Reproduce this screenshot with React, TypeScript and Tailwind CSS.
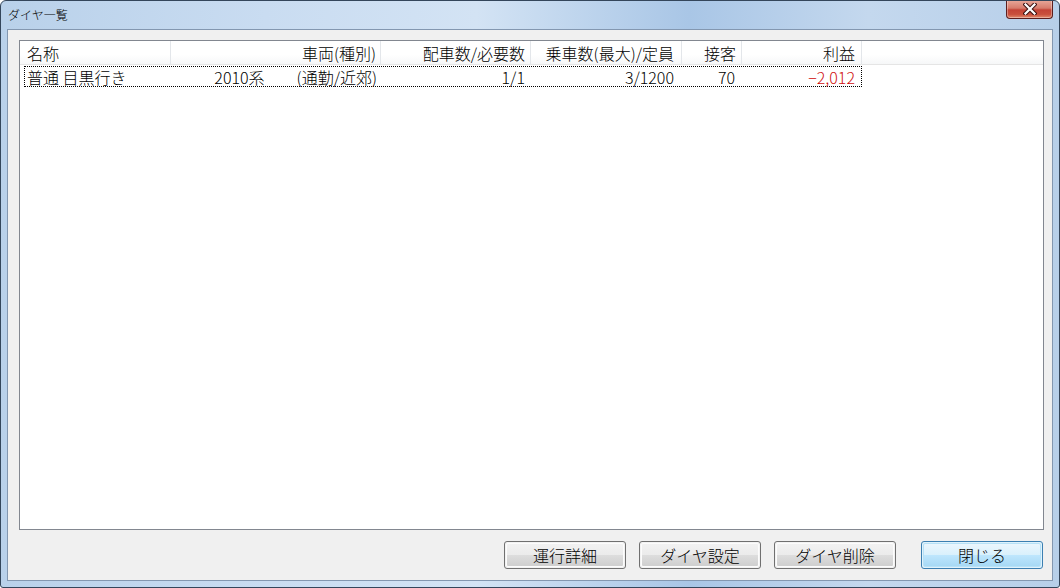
import React from "react";

const F = "font-['Noto_Sans_CJK_JP','Noto_Sans_CJK_SC',sans-serif] font-light";

function Btn({ label, def = false }: { label: string; def?: boolean }) {
  return (
    <div
      className={
        def
          ? "w-[122px] h-[28px] rounded-[3px] border border-[#3c7fb1] p-[1px] bg-[#dff2fc]"
          : "w-[122px] h-[28px] rounded-[3px] border border-[#707070] p-[1px] bg-[#f2f2f2]"
      }
    >
      <div
        className={
          def
            ? "w-full h-full rounded-[2px] border border-[#b6e1f7] bg-[linear-gradient(180deg,#eaf6fd_0%,#d9f0fc_50%,#bee6fd_51%,#a7d9f5_100%)] flex items-center justify-center text-[16px] text-black leading-none"
            : "w-full h-full rounded-[2px] border border-[#fcfcfc] bg-[linear-gradient(180deg,#f2f2f2_0%,#ebebeb_50%,#dddddd_51%,#cfcfcf_100%)] flex items-center justify-center text-[16px] text-black leading-none"
        }
      >
        <span className="-mt-[1px]">{label}</span>
      </div>
    </div>
  );
}

export default function App() {
  return (
    <div
      className={`${F} w-[1060px] h-[588px] flex flex-col rounded-t-[6px] rounded-b-[3px] border border-[#34465b] bg-[linear-gradient(90deg,#b9d1ea_0%,#c9dcf1_25%,#d3e3f4_45%,#a9c6e6_65%,#c4d8ee_82%,#b7cfe9_100%)] overflow-hidden`}
    >
      {/* title bar */}
      <div className="h-[28px] flex items-start justify-between">
        <div className="pl-[7px] pt-[7px] text-[12px] leading-[14px] text-black">ダイヤ一覧</div>
        <div className="-mt-[1px] mr-[6px] w-[47px] h-[19px] rounded-b-[4px] border border-[#5c1e1e] border-t-0 bg-[linear-gradient(180deg,#e9a99b_0%,#d77c6c_45%,#c44336_55%,#c9503c_80%,#e28a6c_100%)] flex items-center justify-center shadow-[inset_0_0_0_1px_rgba(255,255,255,0.35)]">
          <svg width="14" height="12" viewBox="0 0 14 12">
            <path d="M2.5 1.5 L11.5 10.5 M11.5 1.5 L2.5 10.5" stroke="#3a1010" strokeWidth="4.2" strokeLinecap="square" />
            <path d="M2.5 1.5 L11.5 10.5 M11.5 1.5 L2.5 10.5" stroke="#ffffff" strokeWidth="2.2" strokeLinecap="square" />
          </svg>
        </div>
      </div>

      {/* client area */}
      <div className="mx-[6px] h-[552px] border border-[#8397b0] bg-[#f0f0f0] flex flex-col pl-[11px] pr-[8px] pt-[10px]">
        {/* list view */}
        <div className="h-[490px] border border-[#828790] bg-white flex flex-col">
          {/* header */}
          <div className="h-[24px] flex border-b border-[#e5e5e5] bg-[linear-gradient(180deg,#ffffff_0%,#ffffff_60%,#f6f7f8_100%)] text-[16px] text-black leading-none">
            <div className="w-[151px] border-r border-[#e3e6ea] flex items-center pl-[7px]">名称</div>
            <div className="w-[210px] border-r border-[#e3e6ea] flex items-center justify-end pr-[4px]">車両(種別)</div>
            <div className="w-[150px] border-r border-[#e3e6ea] flex items-center justify-end pr-[5px]">配車数/必要数</div>
            <div className="w-[151px] border-r border-[#e3e6ea] flex items-center justify-end pr-[7px]">乗車数(最大)/定員</div>
            <div className="w-[60px] border-r border-[#e3e6ea] flex items-center justify-end pr-[5px]">接客</div>
            <div className="w-[120px] border-r border-[#e3e6ea] flex items-center justify-end pr-[6px]">利益</div>
            <div className="flex-1" />
          </div>
          {/* row */}
          <div className="mt-[1px] ml-[4px] w-[838px] h-[21px] border border-dotted border-black flex text-[16px] text-black leading-none">
            <div className="w-[146px] flex items-center pl-[2px] whitespace-nowrap">普通 目黒行き</div>
            <div className="w-[210px] flex items-center justify-end pr-[4px] whitespace-nowrap">
              <span>2010系</span>
              <span className="ml-[32px]">(通勤/近郊)</span>
            </div>
            <div className="w-[150px] flex items-center justify-end pr-[6px]">1/1</div>
            <div className="w-[151px] flex items-center justify-end pr-[8px]">3/1200</div>
            <div className="w-[60px] flex items-center justify-end pr-[7px]">70</div>
            <div className="w-[119px] flex items-center justify-end pr-[6px] text-[#d01010]">−2,012</div>
          </div>
        </div>
        {/* buttons */}
        <div className="mt-[11px] flex justify-end pr-[1px]">
          <Btn label="運行詳細" />
          <div className="w-[13px]" />
          <Btn label="ダイヤ設定" />
          <div className="w-[13px]" />
          <Btn label="ダイヤ削除" />
          <div className="w-[25px]" />
          <Btn label="閉じる" def />
        </div>
      </div>
    </div>
  );
}
